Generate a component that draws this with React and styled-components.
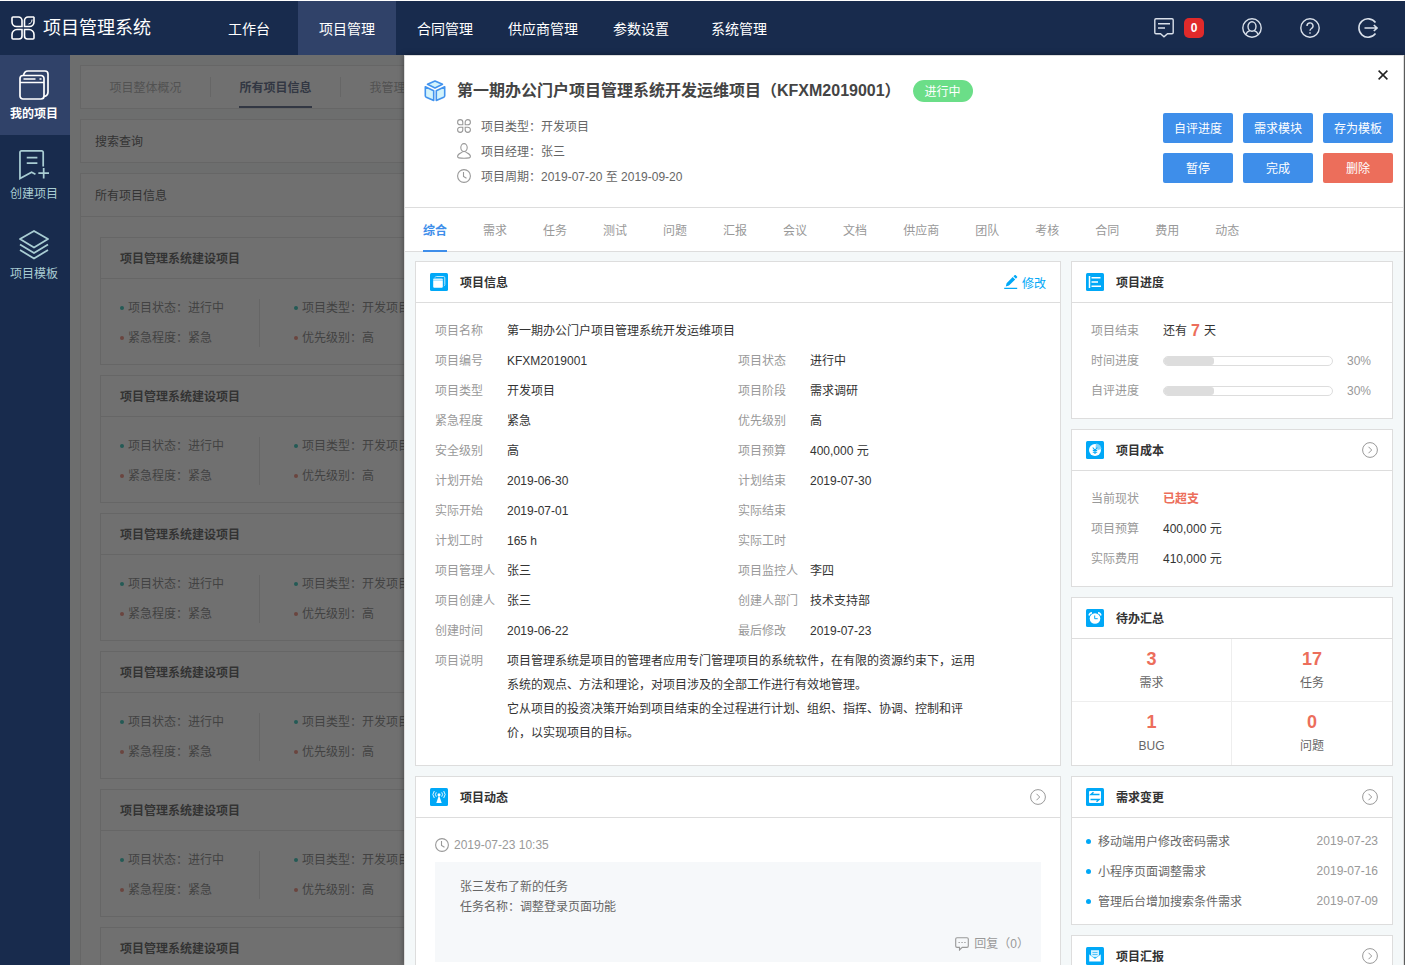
import React, { useState } from "react";
import styled, { createGlobalStyle, css } from "styled-components";

const GlobalStyle = createGlobalStyle`
  * {
    box-sizing: border-box;
  }
  body {
    margin: 0;
    background-color: #fff;
    color: #333;
    font-family: "Liberation Sans", "Noto Sans CJK SC", sans-serif;
    font-size: 12px;
    line-height: 20px;
  }
  h1, h2, h3, p, ul, dl, dd {
    margin: 0;
    padding: 0;
  }
  ul {
    list-style: none;
  }
  a {
    color: inherit;
    text-decoration: none;
  }
  button {
    border: 0;
    padding: 0;
    background: none;
    font: inherit;
    color: inherit;
    cursor: pointer;
  }
  svg {
    display: block;
    flex: none;
  }
`;

// Data
const menu = ["工作台", "项目管理", "合同管理", "供应商管理", "参数设置", "系统管理"];
const drawerTabs = [
  "综合", "需求", "任务", "测试", "问题", "汇报", "会议",
  "文档", "供应商", "团队", "考核", "合同", "费用", "动态",
];
const projects = [1, 2, 3, 4, 5, 6];
const info = [
  ["项目编号", "KFXM2019001", "项目状态", "进行中"],
  ["项目类型", "开发项目", "项目阶段", "需求调研"],
  ["紧急程度", "紧急", "优先级别", "高"],
  ["安全级别", "高", "项目预算", "400,000 元"],
  ["计划开始", "2019-06-30", "计划结束", "2019-07-30"],
  ["实际开始", "2019-07-01", "实际结束", ""],
  ["计划工时", "165 h", "实际工时", ""],
  ["项目管理人", "张三", "项目监控人", "李四"],
  ["项目创建人", "张三", "创建人部门", "技术支持部"],
  ["创建时间", "2019-06-22", "最后修改", "2019-07-23"],
];
const progress = [
  ["时间进度", 30],
  ["自评进度", 30],
];
const todos = [
  [3, "需求"],
  [17, "任务"],
  [1, "BUG"],
  [0, "问题"],
];
const changes = [
  ["移动端用户修改密码需求", "2019-07-23"],
  ["小程序页面调整需求", "2019-07-16"],
  ["管理后台增加搜索条件需求", "2019-07-09"],
];

// Icons
const Svg = ({ size = 20, box = size, children, ...rest }) => (
  <svg
    width={size}
    height={size}
    viewBox={`0 0 ${box} ${box}`}
    fill="none"
    stroke="currentColor"
    aria-hidden="true"
    {...rest}
  >
    {children}
  </svg>
);

const LogoIcon = () => (
  <Svg size={24} strokeWidth="1.6">
    <path d="M2 1h5.500a3.500 3.500 0 0 1 3.500 3.500V10.500H5.500A4.500 4.500 0 0 1 1 6V2a1 1 0 0 1 1-1z" />
    <path d="M22.500 1H17a3.500 3.500 0 0 0-3.500 3.500v6H18.500A4.500 4.500 0 0 0 23 6V1.500z" />
    <path d="M6 13.500h5V20a3 3 0 0 1-3 3H2a1 1 0 0 1-1-1v-3.500a5 5 0 0 1 5-5z" />
    <path d="M18 13.500h-4.500V20a3 3 0 0 0 3 3H22a1 1 0 0 0 1-1v-3.500a5 5 0 0 0-5-5z" />
    <path d="M21 3.500c0 2.500-1 4-3.500 4.500" strokeWidth="1" />
  </Svg>
);

const FoldersIcon = () => (
  <Svg size={30} strokeWidth="1.700">
    <path d="M1 8.500a3 3 0 0 1 3-3h18a3 3 0 0 1 3 3V26a3 3 0 0 1-3 3H4a3 3 0 0 1-3-3z" />
    <path d="M1 12.500h24M4.500 9h12M20.500 9h2" />
    <path d="M4.500 5.500C5 2.500 6.500 1 9 1h17a3 3 0 0 1 3 3v18c0 2.500-1.500 4-4 4.500" />
  </Svg>
);

const CreateIcon = () => (
  <Svg size={30} box={31} strokeWidth="1.800">
    <path d="M25 17V2.500A1.500 1.500 0 0 0 23.500 1h-21A1.500 1.500 0 0 0 1 2.500V29.500l12-6.500 4 2" />
    <path d="M8 8h11M8 13.500h11M25.500 18.500v11M20 24h11" />
  </Svg>
);

const LayersIcon = () => (
  <Svg size={30} strokeWidth="1.800" strokeLinejoin="round">
    <path d="M15 1l14 8-14 8.500L1 9z" />
    <path d="M1 14.500l14 8.500 14-8.500M1 20l14 8.500L29 20" />
  </Svg>
);

const MessageIcon = () => (
  <Svg strokeWidth="1.400">
    <path d="M2 .8h16a1.200 1.200 0 0 1 1.200 1.200v12.500a1.200 1.200 0 0 1-1.200 1.200h-4.500L10 18.800l-3.500-3.100H2a1.200 1.200 0 0 1-1.200-1.200V2A1.200 1.200 0 0 1 2 .8zM4 5.800h12M4 10h7" />
  </Svg>
);

const AccountIcon = () => (
  <Svg strokeWidth="1.400">
    <circle cx="10" cy="10" r="9.200" />
    <ellipse cx="10" cy="8.500" rx="4" ry="4.700" />
    <path d="M3.800 16.500c.7-2 2-3.300 4.200-4M16.200 16.500c-.7-2-2-3.300-4.200-4" />
  </Svg>
);

const HelpIcon = () => (
  <Svg strokeWidth="1.400">
    <circle cx="10" cy="10" r="9.200" />
    <path d="M7 8a3 3 0 1 1 4.500 2.500c-1 .6-1.500 1.100-1.500 2.300M10 14.300v1.500" />
  </Svg>
);

const LogoutIcon = () => (
  <Svg strokeWidth="1.600">
    <path d="M17.500 4.500a9.200 9.200 0 1 0 0 11" />
    <path d="M6.500 10H19M15.800 7l3.200 3-3.200 3" />
  </Svg>
);

const CubeIcon = () => (
  <Svg size={22} strokeWidth="1.600" stroke="#4293ee" strokeLinejoin="round">
    <path d="M11 1l7.500 3.300L11 8 3.500 4.300z" fill="#d3f3fb" />
    <path d="M1.300 6.800L9.700 10.800V20.500L2.300 17.200c-.6-.3-1-.8-1-1.500z" fill="#d3f3fb" />
    <path d="M20.700 6.800L12.300 10.800V20.500l7.400-3.300c.6-.3 1-.8 1-1.500z" fill="#d3f3fb" />
  </Svg>
);

const TypeIcon = () => (
  <Svg size={14} strokeWidth="1.100">
    <path d="M5.800 5.800H3.200A2.600 2.600 0 1 1 5.800 3.200zM8.200 5.800h2.600A2.600 2.600 0 1 0 8.200 3.200zM5.800 8.200H3.200a2.600 2.600 0 1 0 2.600 2.600zM8.200 8.200h2.600a2.600 2.600 0 1 1-2.600 2.600z" />
  </Svg>
);

const PersonIcon = () => (
  <Svg size={14} viewBox="1 0 14 16" height="16" strokeWidth="1.100">
    <ellipse cx="8" cy="4.600" rx="3.200" ry="4" />
    <path d="M6.500 8.500c0 1.700-4.900 1.500-4.900 5 0 .8.400 1.300 1.200 1.400 3 .4 7.400.4 10.400 0 .8-.1 1.200-.6 1.200-1.400 0-3.500-4.900-3.300-4.900-5" />
  </Svg>
);

const ClockIcon = () => (
  <Svg size={14} strokeWidth="1.100">
    <circle cx="7" cy="7" r="6.400" />
    <path d="M6.500 3v4.500l3 1.800" />
  </Svg>
);

const CloseIcon = () => (
  <Svg size={10} strokeWidth="1.500">
    <path d="M.6.600l8.800 8.800M9.400.6L.6 9.400" />
  </Svg>
);

const MoreIcon = () => (
  <Svg size={16} strokeWidth="1">
    <circle cx="8" cy="8" r="7.400" />
    <path d="M6.500 4.800L9.700 8l-3.200 3.200" />
  </Svg>
);

const PencilIcon = () => (
  <Svg size={14} stroke="none" fill="currentColor">
    <path d="M.2 12.800h13v1.200H.2zM1.800 11.500l.8-3.300L8.700 2l2.500 2.400-6.200 6.200zM9.400 1.300L10.600.2c.4-.4.9-.3 1.200 0l1.200 1.200c.4.400.4.900 0 1.200l-1.100 1.100z" />
  </Svg>
);

const ReplyIcon = () => (
  <Svg size={14} strokeWidth="1.100">
    <path d="M2 .8h10a1.300 1.300 0 0 1 1.300 1.300v7a1.300 1.300 0 0 1-1.300 1.300H7.200L4.500 13v-2.600H2A1.300 1.300 0 0 1 .7 9.100v-7A1.300 1.300 0 0 1 2 .8z" />
    <path d="M3.500 5.500h1.300M6.400 5.500h1.300M9.300 5.500h1.300" />
  </Svg>
);

const tileShapes = {
  info: (
    <>
      <path d="M5 4.500c.3-.7.700-1 1.500-1h7c.8 0 1.300.5 1.300 1.300v6.700c0 .8-.3 1.200-1 1.500" stroke="#bfe8fc" />
      <path d="M3.200 7.800h9.600v5.700c0 .8-.5 1.300-1.300 1.300h-7c-.8 0-1.300-.5-1.300-1.300z" fill="#fff" stroke="none" />
      <path d="M3.200 7.800V6.500c0-.6.400-1 1-1h7.600c.6 0 1 .4 1 1v1.300z" fill="#d5f1ff" stroke="none" />
    </>
  ),
  progress: <path d="M3.500 3v12M5.500 4.800h9M5.500 9h6.500M5.500 13.200h9.500" strokeWidth="1.500" />,
  cost: (
    <>
      <circle cx="9" cy="9" r="6" fill="#fff" stroke="none" />
      <path d="M10 2.500a6.500 6.500 0 0 1 5.500 5.500L12 9l-2.500-2.500z" fill="#7fd3fb" stroke="none" />
      <path d="M6.700 6.500L9 9l2.300-2.500M9 9v4M6.800 9.400h4.400M6.800 11.200h4.400" stroke="#00a8f7" strokeWidth="1.100" />
    </>
  ),
  todo: (
    <>
      <circle cx="9" cy="9.500" r="5.300" fill="#fff" stroke="none" />
      <path d="M3 6.500c.3-1.500 1.300-2.500 3-2.700M15 6.500c-.3-1.500-1.300-2.500-3-2.700" strokeWidth="1.400" />
      <path d="M8.700 6.500v3.200h3" stroke="#00a8f7" />
    </>
  ),
  feed: (
    <>
      <path d="M9 7l2.700 8H6.300z" fill="#fff" stroke="none" />
      <circle cx="9" cy="6.800" r="1.500" fill="#fff" stroke="none" />
      <path d="M6.300 4.300a3.500 3.500 0 0 0 0 4.400M11.700 4.300a3.500 3.500 0 0 1 0 4.400M4.300 3a5.500 5.500 0 0 0 0 7M13.700 3a5.500 5.500 0 0 1 0 7" strokeWidth=".9" />
    </>
  ),
  change: (
    <>
      <rect x="3" y="3" width="12" height="12" rx="1" fill="#fff" stroke="none" />
      <path d="M7.500 4.300L5 6.500h8.500M10.500 13.700L13 11.500H4.500" stroke="#00a8f7" strokeWidth="1.500" />
    </>
  ),
  report: (
    <>
      <path d="M5 3.200h8v7H5z" fill="#d5f1ff" stroke="none" />
      <path d="M6.500 5.500h5M6.500 7.500h5" stroke="#00a8f7" strokeWidth=".6" />
      <path d="M3 7l6 4.500L15 7v7.800H3z" fill="#fff" stroke="#00a8f7" strokeWidth=".5" />
    </>
  ),
};

const TileIcon = ({ name }) => (
  <Svg size={18} stroke="#fff">
    <rect width="18" height="18" rx="1.500" fill="#00a8f7" stroke="none" />
    {tileShapes[name]}
  </Svg>
);

const Card = ({ icon, title, action, children }) => (
  <Panel>
    <PanelHead>
      <TileIcon name={icon} />
      <h2>{title}</h2>
      {action === "more" ? (
        <MoreButton type="button" aria-label={`${title} 更多`}>
          <MoreIcon />
        </MoreButton>
      ) : (
        action
      )}
    </PanelHead>
    {children}
  </Panel>
);

const App = () => {
  const [tab, setTab] = useState("综合");
  const [open, setOpen] = useState(true);

  return (
    <Page>
      <GlobalStyle />
      <Header>
        <Brand href="#">
          <LogoIcon />
          项目管理系统
        </Brand>
        <Menu>
          {menu.map((name) => (
            <MenuLink key={name} href="#" $active={name === "项目管理"}>
              {name}
            </MenuLink>
          ))}
        </Menu>
        <Tools>
          <Messages type="button" aria-label="消息">
            <MessageIcon />
            <Count>0</Count>
          </Messages>
          <button type="button" aria-label="账户">
            <AccountIcon />
          </button>
          <button type="button" aria-label="帮助">
            <HelpIcon />
          </button>
          <button type="button" aria-label="退出">
            <LogoutIcon />
          </button>
        </Tools>
      </Header>

      <Body>
        <Sidebar>
          <SideLink href="#" $active>
            <FoldersIcon />
            我的项目
          </SideLink>
          <SideLink href="#">
            <CreateIcon />
            创建项目
          </SideLink>
          <SideLink href="#">
            <LayersIcon />
            项目模板
          </SideLink>
        </Sidebar>

        <Content>
          <FilterTabs>
            <FilterTab><span>项目整体概况</span></FilterTab>
            <FilterTab $active><span>所有项目信息</span></FilterTab>
            <FilterTab><span>我管理的项目</span></FilterTab>
          </FilterTabs>
          <Section>
            <SectionHead>搜索查询</SectionHead>
          </Section>
          <Section>
            <SectionHead $line>所有项目信息</SectionHead>
            <ProjectList>
              {projects.map((id) => (
                <Project key={id}>
                  <h3>项目管理系统建设项目</h3>
                  <Facts>
                    <FactGroup>
                      <Fact $color="#00b5a5">项目状态：进行中</Fact>
                      <Fact $color="#ec6e5b">紧急程度：紧急</Fact>
                    </FactGroup>
                    <FactGroup>
                      <Fact $color="#00b5a5">项目类型：开发项目</Fact>
                      <Fact $color="#ec6e5b">优先级别：高</Fact>
                    </FactGroup>
                  </Facts>
                </Project>
              ))}
            </ProjectList>
          </Section>
        </Content>

        {open && <Overlay />}
        {open && (
          <Drawer>
            <Summary>
              <CubeIcon />
              <SummaryText>
                <TitleRow>
                  <h1>第一期办公门户项目管理系统开发运维项目（KFXM2019001）</h1>
                  <Status>进行中</Status>
                </TitleRow>
                <Meta>
                  <li><TypeIcon /><span>项目类型：开发项目</span></li>
                  <li><PersonIcon /><span>项目经理：张三</span></li>
                  <li><ClockIcon /><span>项目周期：2019-07-20 至 2019-09-20</span></li>
                </Meta>
              </SummaryText>
              <SummarySide>
                <CloseButton type="button" aria-label="关闭" onClick={() => setOpen(false)}>
                  <CloseIcon />
                </CloseButton>
                <Actions>
                  <Button type="button">自评进度</Button>
                  <Button type="button">需求模块</Button>
                  <Button type="button">存为模板</Button>
                  <Button type="button">暂停</Button>
                  <Button type="button">完成</Button>
                  <Button type="button" $danger>删除</Button>
                </Actions>
              </SummarySide>
            </Summary>

            <Tabs role="tablist">
              {drawerTabs.map((name) => (
                <Tab
                  key={name}
                  type="button"
                  role="tab"
                  aria-selected={tab === name}
                  $active={tab === name}
                  onClick={() => setTab(name)}
                >
                  {name}
                </Tab>
              ))}
            </Tabs>

            <Columns>
              <Column>
                <Card
                  icon="info"
                  title="项目信息"
                  action={
                    <EditButton type="button">
                      <PencilIcon />
                      <span>修改</span>
                    </EditButton>
                  }
                >
                  <Details>
                    <Row $wide>
                      <dt>项目名称</dt>
                      <dd>第一期办公门户项目管理系统开发运维项目</dd>
                    </Row>
                    {info.map(([label, value, label2, value2]) => (
                      <React.Fragment key={label}>
                        <Row>
                          <dt>{label}</dt>
                          <dd>{value}</dd>
                        </Row>
                        <Row>
                          <dt>{label2}</dt>
                          <dd>{value2}</dd>
                        </Row>
                      </React.Fragment>
                    ))}
                    <Row $wide>
                      <dt>项目说明</dt>
                      <Description>
                        <p>
                          项目管理系统是项目的管理者应用专门管理项目的系统软件，在有限的资源约束下，运用系统的观点、方法和理论，对项目涉及的全部工作进行有效地管理。
                        </p>
                        <p>
                          它从项目的投资决策开始到项目结束的全过程进行计划、组织、指挥、协调、控制和评价，以实现项目的目标。
                        </p>
                      </Description>
                    </Row>
                  </Details>
                </Card>

                <Card icon="feed" title="项目动态" action="more">
                  <Feed>
                    <FeedTime>
                      <ClockIcon />
                      2019-07-23 10:35
                    </FeedTime>
                    <FeedItem>
                      <p>张三发布了新的任务</p>
                      <p>任务名称：调整登录页面功能</p>
                      <Reply type="button">
                        <ReplyIcon />
                        回复（0）
                      </Reply>
                    </FeedItem>
                  </Feed>
                </Card>
              </Column>

              <Column>
                <Card icon="progress" title="项目进度">
                  <List>
                    <Row>
                      <dt>项目结束</dt>
                      <Remaining>
                        还有<strong>7</strong>天
                      </Remaining>
                    </Row>
                    {progress.map(([label, value]) => (
                      <Row key={label}>
                        <dt>{label}</dt>
                        <Progress>
                          <Track role="progressbar" aria-label={label} aria-valuenow={value}>
                            <Bar style={{ width: `${value}%` }} />
                          </Track>
                          {value}%
                        </Progress>
                      </Row>
                    ))}
                  </List>
                </Card>

                <Card icon="cost" title="项目成本" action="more">
                  <List>
                    <Row>
                      <dt>当前现状</dt>
                      <Over>已超支</Over>
                    </Row>
                    <Row>
                      <dt>项目预算</dt>
                      <dd>400,000 元</dd>
                    </Row>
                    <Row>
                      <dt>实际费用</dt>
                      <dd>410,000 元</dd>
                    </Row>
                  </List>
                </Card>

                <Card icon="todo" title="待办汇总">
                  <Todos>
                    {todos.map(([count, label]) => (
                      <Todo key={label}>
                        <strong>{count}</strong>
                        {label}
                      </Todo>
                    ))}
                  </Todos>
                </Card>

                <Card icon="change" title="需求变更" action="more">
                  <Changes>
                    {changes.map(([title, date]) => (
                      <li key={title}>
                        <a href="#">{title}</a>
                        <time>{date}</time>
                      </li>
                    ))}
                  </Changes>
                </Card>

                <Card icon="report" title="项目汇报" action="more" />
              </Column>
            </Columns>
          </Drawer>
        )}
      </Body>
    </Page>
  );
};

const Page = styled.div`
  display: flex;
  flex-direction: column;
  height: 100vh;
  padding-top: 1px;
  overflow: hidden;
`;

// Header
const Header = styled.header`
  display: flex;
  flex: none;
  height: 54px;
  background-color: #182b4d;
  color: #fff;
`;

const Brand = styled.a`
  display: flex;
  align-items: center;
  gap: 8px;
  width: 200px;
  padding-left: 11px;
  font-size: 18px;
`;

const Menu = styled.nav`
  display: flex;
`;

const MenuLink = styled.a`
  display: flex;
  align-items: center;
  justify-content: center;
  width: 98px;
  padding-top: 2px;
  font-size: 14px;
  background-color: ${({ $active }) => ($active ? "#304269" : "transparent")};
`;

const Tools = styled.div`
  display: flex;
  align-items: center;
  gap: 38px;
  margin-left: auto;
  padding-right: 27px;
  color: #d9e0ea;
`;

const Messages = styled.button`
  display: flex;
  gap: 10px;
`;

const Count = styled.span`
  width: 20px;
  height: 20px;
  border-radius: 5px;
  background-color: #e02a2a;
  color: #fff;
  font-weight: 700;
  text-align: center;
`;

const Body = styled.div`
  position: relative;
  display: flex;
  flex: 1;
  min-height: 0;
`;

// Sidebar
const Sidebar = styled.nav`
  flex: none;
  width: 70px;
  background-color: #182b4d;
`;

const SideLink = styled.a`
  display: flex;
  flex-direction: column;
  align-items: center;
  justify-content: space-between;
  height: 80px;
  padding: 15px 2px 11px 0;
  color: #a9cdd3;
  ${({ $active }) =>
    $active &&
    css`
      background-color: #304269;
      color: #fff;
      font-weight: 700;
    `}
`;

// Project list
const Content = styled.main`
  flex: 1;
  min-width: 0;
  padding: 10px;
  overflow-y: auto;
  scrollbar-width: none;
  background-color: #f4f8f9;
`;

const Section = styled.section`
  margin-bottom: 10px;
  border: 1px solid #ddd;
  background-color: #fff;
`;

const FilterTabs = styled(Section)`
  display: flex;
  align-items: center;
`;

const FilterTab = styled.button`
  display: flex;
  justify-content: center;
  width: 130px;
  height: 20px;
  border-right: 1px solid #ddd;
  line-height: 22px;
  color: #999;
  margin: 11px 0;
  span {
    height: 31px;
  }
  ${({ $active }) =>
    $active &&
    css`
      color: #304269;
      font-weight: 700;
      span {
        border-bottom: 2px solid #304269;
      }
    `}
`;

const SectionHead = styled.h2`
  padding: 2px 0 0 14px;
  border-bottom: ${({ $line }) => ($line ? "1px solid #ddd" : "0")};
  font-size: 12px;
  font-weight: 400;
  line-height: 40px;
`;

const ProjectList = styled.div`
  display: flex;
  flex-direction: column;
  gap: 10px;
  padding: 20px 19px;
`;

const Project = styled.article`
  border: 1px solid #ddd;
  h3 {
    padding: 2px 0 0 19px;
    border-bottom: 1px solid #ddd;
    font-size: 12px;
    line-height: 38px;
  }
`;

const Facts = styled.div`
  display: flex;
  padding: 20px 0 17px 19px;
`;

const FactGroup = styled.ul`
  width: 174px;
  padding-left: 34px;
  color: #666;
  &:first-child {
    width: 140px;
    padding-left: 0;
    border-right: 1px solid #ddd;
  }
`;

const Fact = styled.li`
  display: flex;
  align-items: center;
  gap: 4px;
  line-height: 18px;
  white-space: nowrap;
  & + & {
    margin-top: 12px;
  }
  &::before {
    content: "";
    width: 4px;
    height: 4px;
    border-radius: 50%;
    background-color: ${({ $color }) => $color};
  }
`;

const Overlay = styled.div`
  position: absolute;
  inset: 0 0 0 70px;
  background-color: rgba(51, 51, 51, 0.7);
`;

// Drawer
const Drawer = styled.aside`
  position: absolute;
  inset: 0 1px 0 404px;
  overflow-y: auto;
  scrollbar-width: none;
  border: 1px solid #ddd;
  border-bottom: 0;
  background-color: #f4f8f9;
  box-shadow: 0 0 6px rgba(0, 0, 0, 0.4);
`;

const Summary = styled.div`
  display: flex;
  align-items: flex-start;
  min-height: 152px;
  padding: 24px 10px 0 19px;
  border-bottom: 1px solid #ddd;
  background-color: #fff;
`;

const SummaryText = styled.div`
  flex: 1;
  margin-left: 11px;
`;

const TitleRow = styled.div`
  display: flex;
  align-items: center;
  gap: 12px;
  h1 {
    color: #444;
    font-size: 16px;
    line-height: 22px;
  }
`;

const Status = styled.span`
  width: 60px;
  padding-top: 2px;
  border-radius: 11px;
  background-color: #6bde88;
  color: #fff;
  line-height: 20px;
  text-align: center;
`;

const Meta = styled.ul`
  margin-top: 11px;
  color: #666;
  line-height: 22px;
  li {
    display: flex;
    align-items: center;
    gap: 10px;
  }
  span {
    padding-top: 3px;
  }
  svg {
    color: #999;
  }
`;

const SummarySide = styled.div`
  display: flex;
  flex-direction: column;
  align-items: flex-end;
`;

const CloseButton = styled.button`
  width: 20px;
  height: 20px;
  margin-top: -15px;
  padding: 5px;
  color: #222;
`;

const Actions = styled.div`
  display: grid;
  grid-template-columns: repeat(3, 70px);
  gap: 10px;
  margin-top: 28px;
`;

const Button = styled.button`
  height: 30px;
  padding-top: 2px;
  border-radius: 2px;
  background-color: ${({ $danger }) => ($danger ? "#ec6e5b" : "#3e8eea")};
  color: #fff;
`;

const Tabs = styled.div`
  display: flex;
  gap: 36px;
  padding-left: 18px;
  border-bottom: 1px solid #ddd;
  background-color: #fff;
`;

const Tab = styled.button`
  height: 44px;
  margin-bottom: -1px;
  padding-top: 4px;
  border-bottom: 2px solid transparent;
  color: #999;
  ${({ $active }) =>
    $active &&
    css`
      border-color: #3e8eea;
      color: #3e8eea;
      font-weight: 700;
    `}
`;

const Columns = styled.div`
  display: grid;
  grid-template-columns: minmax(0, 1fr) 322px;
  gap: 10px;
  padding: 9px 10px;
`;

const Column = styled.div`
  display: flex;
  flex-direction: column;
  gap: 10px;
`;

const Panel = styled.section`
  border: 1px solid #ddd;
  background-color: #fff;
`;

const PanelHead = styled.header`
  display: flex;
  align-items: center;
  height: 41px;
  padding: 0 14px;
  border-bottom: 1px solid #ddd;
  h2 {
    flex: 1;
    margin-left: 12px;
    padding-top: 2px;
    font-size: 12px;
  }
`;

const MoreButton = styled.button`
  color: #999;
`;

const EditButton = styled.button`
  display: flex;
  align-items: center;
  gap: 4px;
  color: #00a8f7;
  span {
    padding-top: 3px;
  }
`;

const Details = styled.dl`
  display: grid;
  grid-template-columns: 1fr 1fr;
  padding: 13px 19px 17px;
`;

const List = styled.dl`
  padding: 13px 19px 12px;
`;

const Row = styled.div`
  display: flex;
  grid-column: ${({ $wide }) => ($wide ? "1 / -1" : "auto")};
  line-height: 30px;
  dt {
    flex: none;
    width: 72px;
    color: #999;
  }
`;

const Description = styled.dd`
  padding: 3px 60px 3px 0;
  line-height: 24px;
`;

const Feed = styled.div`
  padding: 17px 19px;
`;

const FeedTime = styled.div`
  display: flex;
  align-items: center;
  gap: 5px;
  margin-bottom: 7px;
  color: #999;
`;

const FeedItem = styled.div`
  display: flex;
  flex-direction: column;
  padding: 15px 12px 8px 25px;
  background-color: #f6f8fa;
  color: #666;
`;

const Reply = styled.button`
  display: flex;
  align-items: center;
  align-self: flex-end;
  gap: 5px;
  margin-top: 17px;
  color: #999;
`;

const Remaining = styled.dd`
  display: flex;
  gap: 4px;
  height: 30px;
  strong {
    color: #ec6e5b;
    font-size: 16px;
  }
`;

const Progress = styled.dd`
  display: flex;
  flex: 1;
  align-items: center;
  gap: 14px;
  color: #999;
`;

const Track = styled.div`
  width: 170px;
  height: 10px;
  overflow: hidden;
  border: 1px solid #ddd;
  border-radius: 5px;
`;

const Bar = styled.div`
  height: 8px;
  border-radius: 0 3px 3px 0;
  background-color: #ddd;
`;

const Over = styled.dd`
  color: #ec6e5b;
  font-weight: 700;
`;

const Todos = styled.div`
  display: grid;
  grid-template-columns: 1fr 1fr;
`;

const Todo = styled.a.attrs({ href: "#" })`
  display: flex;
  flex-direction: column;
  align-items: center;
  height: 63px;
  padding-top: 10px;
  color: #666;
  line-height: 28px;
  strong {
    color: #ec6e5b;
    font-size: 18px;
    line-height: 20px;
  }
  &:nth-child(odd) {
    border-right: 1px solid #eee;
  }
  &:nth-child(-n + 2) {
    border-bottom: 1px solid #eee;
  }
`;

const Changes = styled.ul`
  padding: 8px 14px;
  line-height: 28px;
  li {
    display: flex;
    align-items: center;
    color: #666;
  }
  li::before {
    content: "";
    width: 5px;
    height: 5px;
    margin-right: 7px;
    border-radius: 50%;
    background-color: #00a8f7;
  }
  a {
    padding-top: 2px;
  }
  time {
    margin-left: auto;
    color: #999;
  }
`;

export default App;
